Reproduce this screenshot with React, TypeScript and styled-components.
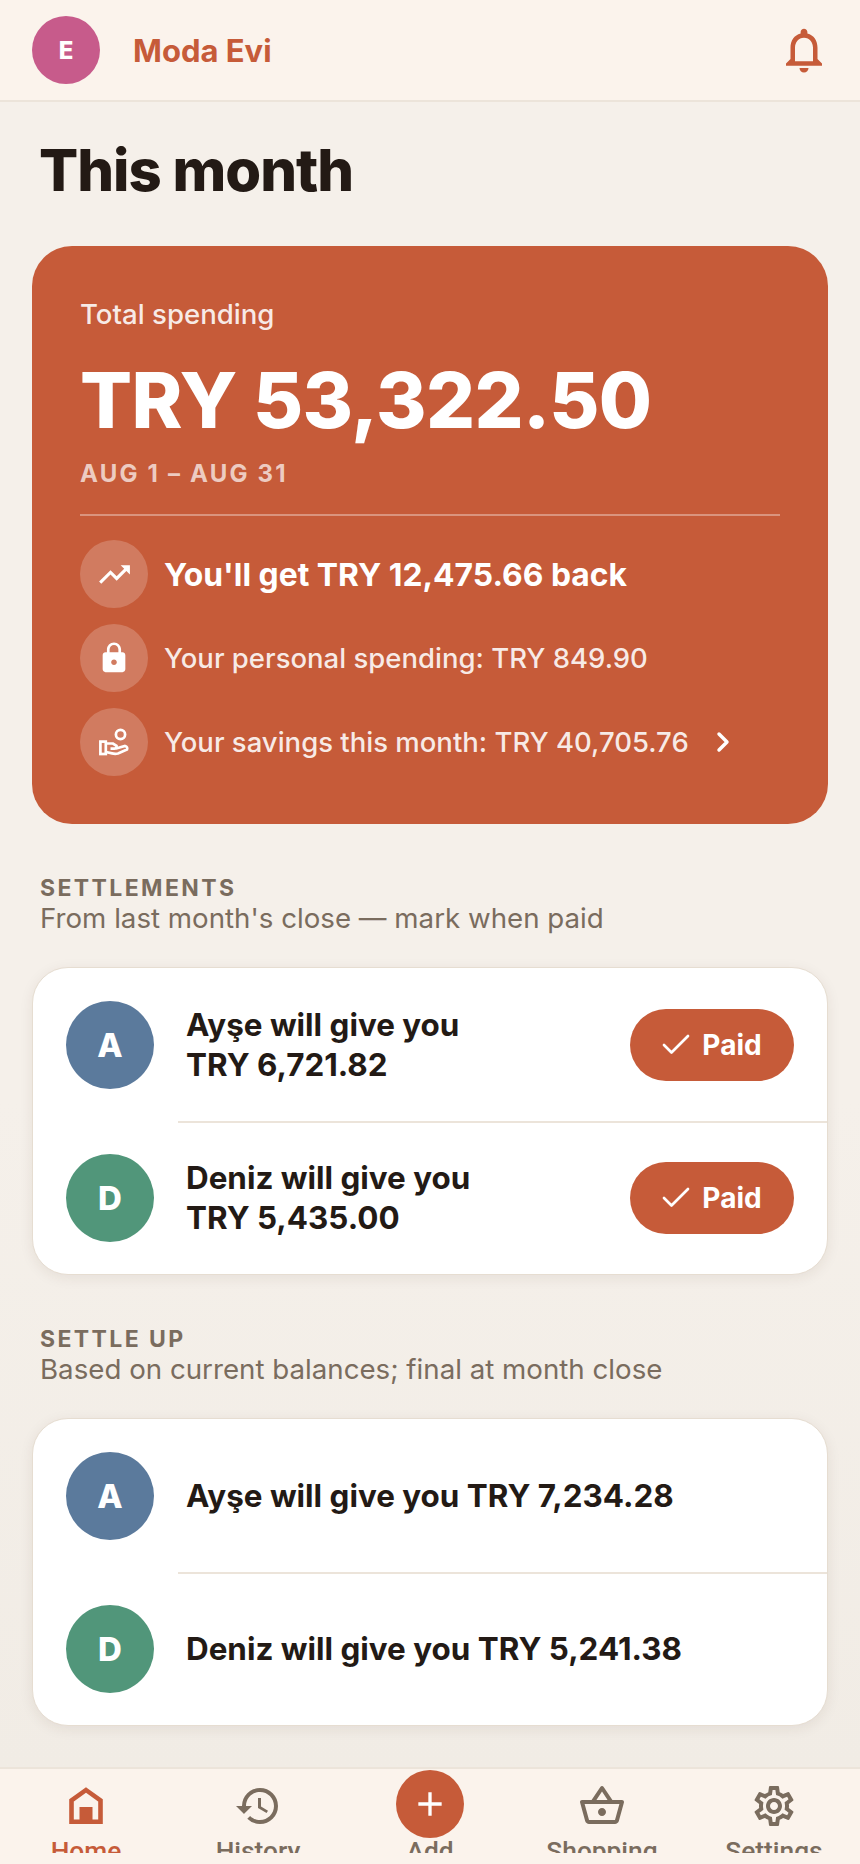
import styled, { createGlobalStyle } from 'styled-components'
import { MdOutlineNotifications, MdTrendingUp, MdLock, MdHistory, MdOutlineShoppingBasket, MdOutlineSettings, MdAdd } from 'react-icons/md'
import { Check, ChevronRight } from 'lucide-react'

const GlobalStyle = createGlobalStyle`
  html, body {
    margin: 0;
    padding: 0;
    background: #f5f0ea;
    font-family: Inter, "Liberation Sans", sans-serif;
    color: #231a15;
  }
  * {
    box-sizing: border-box;
  }
`

const HomeIcon = () => (
  <svg width="34" height="37" viewBox="0 0 34 37" fill="none">
    <path d="M17 3 L31.5 13.5 V34.7 H2.5 V13.5 Z" stroke="currentColor" strokeWidth="4.6" />
    <rect x="10.5" y="20" width="13" height="15" fill="currentColor" />
  </svg>
)

const SavingsIcon = () => (
  <svg width="30" height="28" viewBox="0 0 30 28" fill="none" stroke="#fff" strokeWidth="2.7">
    <circle cx="21.5" cy="6.5" r="4.6" />
    <rect x="1.4" y="13.6" width="5.4" height="12.4" />
    <path d="M7 15.5 H14 L17.5 17.8 Q18 20.8 15 20.6 H11.5 M17 20.5 L26 18 Q29 19 28 21.5 L19 25.5 Q16 26.2 13 25.4 L7 24" />
  </svg>
)

const settlements = [
  { initial: 'A', color: '#5b7a9c', name: 'Ayşe will give you', amount: 'TRY 6,721.82' },
  { initial: 'D', color: '#51967a', name: 'Deniz will give you', amount: 'TRY 5,435.00' },
]

const settleUp = [
  { initial: 'A', color: '#5b7a9c', text: 'Ayşe will give you TRY 7,234.28' },
  { initial: 'D', color: '#51967a', text: 'Deniz will give you TRY 5,241.38' },
]

const App = () => {
  return (
    <Page>
      <GlobalStyle />
      <Header>
        <Brand>
          <HouseAvatar>E</HouseAvatar>
          <HouseName>Moda Evi</HouseName>
        </Brand>
        <MdOutlineNotifications size={54} color="#c65b39" />
      </Header>

      <Main>
        <Title>This month</Title>

        <Hero>
          <HeroLabel>Total spending</HeroLabel>
          <HeroAmount>TRY 53,322.50</HeroAmount>
          <HeroPeriod>AUG 1 – AUG 31</HeroPeriod>
          <HeroRule />
          <HeroRows>
            <HeroRow>
              <HeroIcon><MdTrendingUp size={37} /></HeroIcon>
              <HeroLead>You'll get TRY 12,475.66 back</HeroLead>
            </HeroRow>
            <HeroRow>
              <HeroIcon><MdLock size={34} /></HeroIcon>
              <HeroText>Your personal spending: TRY 849.90</HeroText>
            </HeroRow>
            <HeroRow>
              <HeroIcon><SavingsIcon /></HeroIcon>
              <HeroText>Your savings this month: TRY 40,705.76</HeroText>
              <ChevronIcon size={32} strokeWidth={2.6} />
            </HeroRow>
          </HeroRows>
        </Hero>

        <SectionHead>
          <SectionTitle>SETTLEMENTS</SectionTitle>
          <SectionNote>From last month's close — mark when paid</SectionNote>
        </SectionHead>
        <Card>
          {settlements.map((s) => (
            <Row key={s.initial}>
              <PersonAvatar $color={s.color}>{s.initial}</PersonAvatar>
              <RowText>
                {s.name}
                <br />
                {s.amount}
              </RowText>
              <PaidButton>
                <Check size={36} strokeWidth={1.8} />
                Paid
              </PaidButton>
            </Row>
          ))}
        </Card>

        <SectionHead>
          <SectionTitle>SETTLE UP</SectionTitle>
          <SectionNote>Based on current balances; final at month close</SectionNote>
        </SectionHead>
        <Card>
          {settleUp.map((s) => (
            <Row key={s.initial}>
              <PersonAvatar $color={s.color}>{s.initial}</PersonAvatar>
              <RowText>{s.text}</RowText>
            </Row>
          ))}
        </Card>
      </Main>

      <BottomNav>
        <NavItem $active>
          <NavIcon><HomeIcon /></NavIcon>
          <NavLabel>Home</NavLabel>
        </NavItem>
        <NavItem>
          <NavIcon><MdHistory size={48} /></NavIcon>
          <NavLabel>History</NavLabel>
        </NavItem>
        <NavItem>
          <NavIcon><AddCircle><MdAdd size={40} /></AddCircle></NavIcon>
          <NavLabel>Add</NavLabel>
        </NavItem>
        <NavItem>
          <NavIcon><MdOutlineShoppingBasket size={48} /></NavIcon>
          <NavLabel>Shopping</NavLabel>
        </NavItem>
        <NavItem>
          <NavIcon><MdOutlineSettings size={48} /></NavIcon>
          <NavLabel>Settings</NavLabel>
        </NavItem>
      </BottomNav>
    </Page>
  )
}

export default App

const Page = styled.div`
  display: flex;
  flex-direction: column;
  height: 100vh;
  overflow: hidden;
`

const Header = styled.header`
  flex: none;
  display: flex;
  align-items: center;
  justify-content: space-between;
  height: 102px;
  padding: 0 29px 0 32px;
  background: #fbf3ec;
  border-bottom: 2px solid #ece4da;
`

const Brand = styled.div`
  display: flex;
  align-items: center;
  gap: 33px;
`

const HouseAvatar = styled.div`
  display: flex;
  align-items: center;
  justify-content: center;
  width: 68px;
  height: 68px;
  border-radius: 50%;
  background: #c75b8b;
  color: #fff;
  font-size: 24px;
  font-weight: 800;
`

const HouseName = styled.div`
  color: #c65b39;
  font-size: 31px;
  font-weight: 700;
`

const Main = styled.main`
  flex: 1;
  min-height: 0;
  overflow: hidden;
  padding: 0 32px;
  background: linear-gradient(to bottom, #f5f0ea 60%, #f1ece5 100%);
`

const Title = styled.h1`
  margin: 33px 0 0 7px;
  font-size: 58px;
  line-height: 70px;
  font-weight: 800;
  letter-spacing: -1px;
  color: #231a15;
`

const Hero = styled.section`
  margin-top: 41px;
  padding: 50px 48px 48px;
  background: #c65b39;
  border-radius: 40px;
  color: #fff;
`

const HeroLabel = styled.div`
  font-size: 27.6px;
  line-height: 36px;
  font-weight: 500;
  color: rgba(255, 255, 255, 0.88);
`

const HeroAmount = styled.div`
  margin-top: 23px;
  font-size: 77px;
  line-height: 90px;
  font-weight: 800;
  letter-spacing: -0.6px;
  color: #fff;
`

const HeroPeriod = styled.div`
  margin-top: 13px;
  font-size: 24px;
  line-height: 32px;
  font-weight: 700;
  letter-spacing: 2.2px;
  color: rgba(255, 255, 255, 0.7);
`

const HeroRule = styled.div`
  height: 2px;
  margin-top: 24px;
  background: rgba(255, 255, 255, 0.35);
`

const HeroRows = styled.div`
  display: flex;
  flex-direction: column;
  gap: 16px;
  margin-top: 24px;
`

const HeroRow = styled.div`
  display: flex;
  align-items: center;
  gap: 16px;
`

const HeroIcon = styled.div`
  flex: none;
  display: flex;
  align-items: center;
  justify-content: center;
  width: 68px;
  height: 68px;
  border-radius: 50%;
  background: rgba(255, 255, 255, 0.2);
  color: #fff;
`

const HeroLead = styled.div`
  font-size: 31.8px;
  font-weight: 700;
  color: #fff;
`

const HeroText = styled.div`
  font-size: 27.5px;
  font-weight: 500;
  color: rgba(255, 255, 255, 0.88);
`

const ChevronIcon = styled(ChevronRight)`
  margin-left: 2px;
  color: #fff;
`

const SectionHead = styled.div`
  margin: 51px 0 0 8px;
`

const SectionTitle = styled.div`
  font-size: 23px;
  line-height: 27px;
  font-weight: 700;
  letter-spacing: 2.4px;
  color: #7a6c5e;
`

const SectionNote = styled.div`
  font-size: 27.7px;
  line-height: 33px;
  color: #7a6c5e;
`

const Card = styled.div`
  width: 796px;
  margin-top: 32px;
  background: #fff;
  border: 1px solid #e6ddd1;
  border-radius: 36px;
  box-shadow: 0 3px 14px rgba(60, 40, 20, 0.08);
  overflow: hidden;
`

const Row = styled.div`
  position: relative;
  display: flex;
  align-items: center;
  height: 153px;
  padding: 0 33px;
  & + &::before {
    content: '';
    position: absolute;
    top: 0;
    left: 145px;
    right: 0;
    height: 2px;
    background: #ece4da;
  }
`

const PersonAvatar = styled.div<{ $color: string }>`
  flex: none;
  display: flex;
  align-items: center;
  justify-content: center;
  width: 88px;
  height: 88px;
  border-radius: 50%;
  background: ${(p) => p.$color};
  color: #fff;
  font-size: 33px;
  font-weight: 800;
`

const RowText = styled.div`
  flex: 1;
  margin-left: 32px;
  font-size: 31.4px;
  line-height: 40px;
  font-weight: 700;
  color: #231a15;
`

const PaidButton = styled.button`
  display: flex;
  align-items: center;
  justify-content: center;
  gap: 8px;
  width: 164px;
  height: 72px;
  padding: 0 4px 0 0;
  border: none;
  border-radius: 36px;
  background: #c65b39;
  color: #fff;
  font-family: inherit;
  font-size: 28px;
  font-weight: 700;
`

const BottomNav = styled.nav`
  flex: none;
  display: grid;
  grid-template-columns: repeat(5, 1fr);
  height: 97px;
  background: #fbf3ec;
  border-top: 2px solid #ece4da;
`

const NavItem = styled.div<{ $active?: boolean }>`
  display: flex;
  flex-direction: column;
  align-items: center;
  height: 84px;
  overflow: hidden;
  color: ${(p) => (p.$active ? '#c65b39' : '#7a6c5e')};
`

const NavIcon = styled.div`
  flex: none;
  display: flex;
  align-items: center;
  justify-content: center;
  height: 73px;
  margin-bottom: -5px;
`

const AddCircle = styled.div`
  flex: none;
  display: flex;
  align-items: center;
  justify-content: center;
  width: 68px;
  height: 68px;
  margin-bottom: 3px;
  border-radius: 50%;
  background: #c65b39;
  color: #fff;
`

const NavLabel = styled.div`
  flex: none;
  font-family: Roboto, sans-serif;
  font-size: 26.3px;
  line-height: 28px;
  font-weight: 500;
`
